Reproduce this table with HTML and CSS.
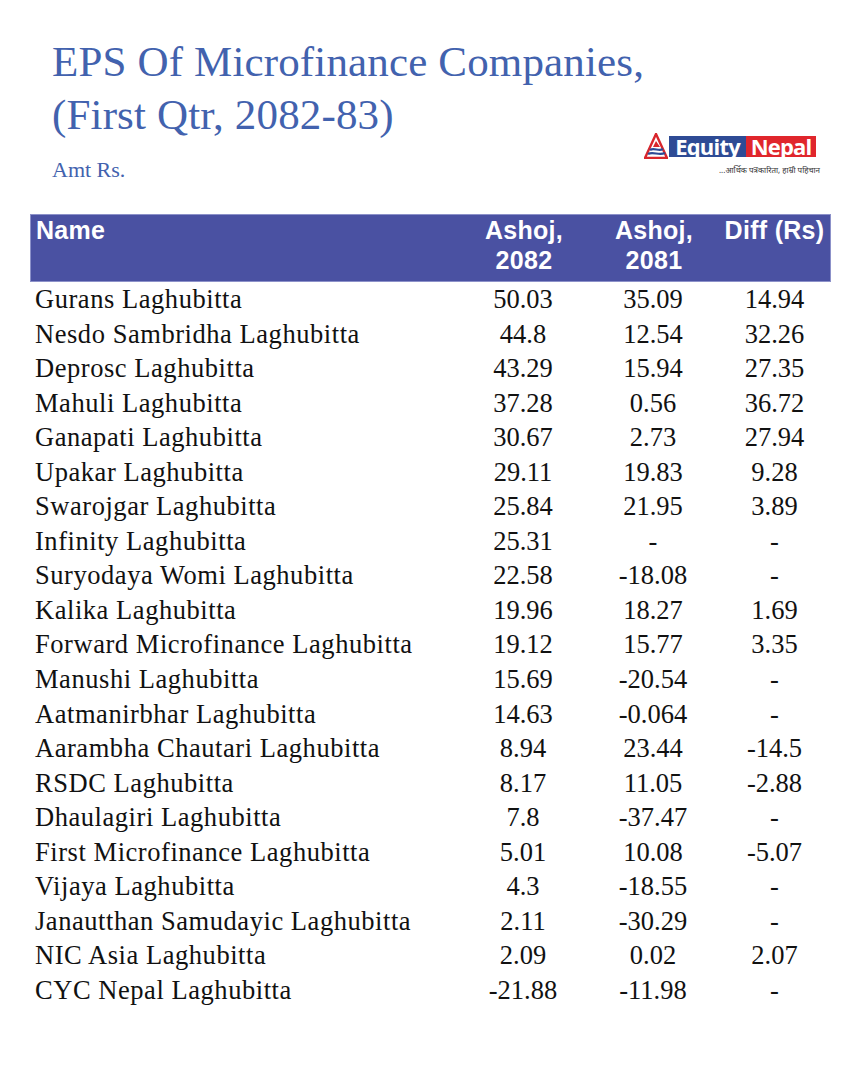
FILE: index.html
```html
<!DOCTYPE html>
<html lang="en">
<head>
<meta charset="utf-8">
<title>EPS Of Microfinance Companies</title>
<link rel="stylesheet" href="styles.css">
</head>
<body>
<div class="page">
  <header class="top">
    <div class="titles">
      <h1 class="title">EPS Of Microfinance Companies,<br>(First Qtr, 2082-83)</h1>
      <p class="unit">Amt Rs.</p>
    </div>
    <div class="logo">
      <div class="logo-bar">
        <svg class="logo-icon" viewBox="0 0 24 26" width="24" height="26">
          <path d="M12 1 L23 25 L1 25 Z" fill="none" stroke="#d9262c" stroke-width="2.4" stroke-linejoin="miter"/>
          <path d="M12 8 L16 14 L9 14 Z" fill="#d9262c"/>
          <path d="M6 17 C10 14 15 19 19 16" fill="none" stroke="#2d4b96" stroke-width="2.2"/>
          <path d="M4 21 C9 18 15 23 21 20" fill="none" stroke="#2d4b96" stroke-width="2.2"/>
        </svg>
        <span class="logo-equity">Equity</span><span class="logo-nepal">Nepal</span>
      </div>
      <div class="logo-tag">...आर्थिक पत्रकारिता, हाम्रो पहिचान</div>
    </div>
  </header>

  <div class="table">
    <div class="thead">
      <div class="th th-name">Name</div>
      <div class="th">Ashoj,<br>2082</div>
      <div class="th">Ashoj,<br>2081</div>
      <div class="th">Diff (Rs)</div>
    </div>
    <div class="tbody">
      <div class="td name">Gurans Laghubitta</div><div class="td">50.03</div><div class="td">35.09</div><div class="td">14.94</div>
      <div class="td name">Nesdo Sambridha Laghubitta</div><div class="td">44.8</div><div class="td">12.54</div><div class="td">32.26</div>
      <div class="td name">Deprosc Laghubitta</div><div class="td">43.29</div><div class="td">15.94</div><div class="td">27.35</div>
      <div class="td name">Mahuli Laghubitta</div><div class="td">37.28</div><div class="td">0.56</div><div class="td">36.72</div>
      <div class="td name">Ganapati Laghubitta</div><div class="td">30.67</div><div class="td">2.73</div><div class="td">27.94</div>
      <div class="td name">Upakar Laghubitta</div><div class="td">29.11</div><div class="td">19.83</div><div class="td">9.28</div>
      <div class="td name">Swarojgar Laghubitta</div><div class="td">25.84</div><div class="td">21.95</div><div class="td">3.89</div>
      <div class="td name">Infinity Laghubitta</div><div class="td">25.31</div><div class="td">-</div><div class="td">-</div>
      <div class="td name">Suryodaya Womi Laghubitta</div><div class="td">22.58</div><div class="td">-18.08</div><div class="td">-</div>
      <div class="td name">Kalika Laghubitta</div><div class="td">19.96</div><div class="td">18.27</div><div class="td">1.69</div>
      <div class="td name">Forward Microfinance Laghubitta</div><div class="td">19.12</div><div class="td">15.77</div><div class="td">3.35</div>
      <div class="td name">Manushi Laghubitta</div><div class="td">15.69</div><div class="td">-20.54</div><div class="td">-</div>
      <div class="td name">Aatmanirbhar Laghubitta</div><div class="td">14.63</div><div class="td">-0.064</div><div class="td">-</div>
      <div class="td name">Aarambha Chautari Laghubitta</div><div class="td">8.94</div><div class="td">23.44</div><div class="td">-14.5</div>
      <div class="td name">RSDC Laghubitta</div><div class="td">8.17</div><div class="td">11.05</div><div class="td">-2.88</div>
      <div class="td name">Dhaulagiri Laghubitta</div><div class="td">7.8</div><div class="td">-37.47</div><div class="td">-</div>
      <div class="td name">First Microfinance Laghubitta</div><div class="td">5.01</div><div class="td">10.08</div><div class="td">-5.07</div>
      <div class="td name">Vijaya Laghubitta</div><div class="td">4.3</div><div class="td">-18.55</div><div class="td">-</div>
      <div class="td name">Janautthan Samudayic Laghubitta</div><div class="td">2.11</div><div class="td">-30.29</div><div class="td">-</div>
      <div class="td name">NIC Asia Laghubitta</div><div class="td">2.09</div><div class="td">0.02</div><div class="td">2.07</div>
      <div class="td name">CYC Nepal Laghubitta</div><div class="td">-21.88</div><div class="td">-11.98</div><div class="td">-</div>
    </div>
  </div>
</div>
</body>
</html>
```

FILE: styles.css
```css
html, body {
  margin: 0;
  padding: 0;
  background: #ffffff;
}

.page {
  width: 864px;
  height: 1080px;
  box-sizing: border-box;
  padding: 0 33px 0 30px;
  font-family: "Liberation Serif", "Times New Roman", serif;
  color: #111111;
}

.top {
  display: flex;
  justify-content: space-between;
  align-items: flex-end;
  padding: 35px 0 0 22px;
  height: 214px;
  box-sizing: border-box;
}

.titles {
  align-self: flex-start;
  flex: none;
}

.title {
  margin: 0;
  font-weight: normal;
  font-size: 43px;
  line-height: 53px;
  color: #4262ae;
  letter-spacing: 0.15px;
  white-space: nowrap;
}

.unit {
  margin: 16px 0 0;
  font-size: 22px;
  line-height: 26px;
  color: #4262ae;
}

.logo {
  flex: none;
  display: flex;
  flex-direction: column;
  align-items: flex-end;
  margin-bottom: 39px;
  margin-right: 14px;
}

.logo-bar {
  display: flex;
  align-items: center;
  height: 26px;
  margin-right: 4px;
}

.logo-icon {
  display: block;
  margin-right: 1px;
}

.logo-equity,
.logo-nepal {
  display: flex;
  align-items: center;
  justify-content: center;
  font-family: "Open Sans", "Noto Sans", sans-serif;
  font-weight: 700;
  font-size: 22px;
  line-height: 21px;
  height: 21px;
  color: #ffffff;
  letter-spacing: -0.8px;
  box-sizing: border-box;
  white-space: nowrap;
}

.logo-equity {
  background: #2e4b95;
  width: 77px;
}

.logo-nepal {
  background: #e0262c;
  width: 70px;
}

.logo-tag {
  margin-top: 6px;
  font-family: "Noto Sans", "DejaVu Sans", sans-serif;
  font-size: 8px;
  line-height: 10px;
  color: #333333;
  white-space: nowrap;
}

.thead {
  display: grid;
  grid-template-columns: 428px 130px 130px 1fr;
  background: #4a51a2;
  border: 1px solid #8c91c9;
  height: 68px;
  box-sizing: border-box;
  font-family: "Liberation Sans", Arial, sans-serif;
  font-weight: 700;
  font-size: 25px;
  line-height: 30px;
  letter-spacing: 0.3px;
  color: #ffffff;
}

.th {
  text-align: center;
  padding-top: 0;
}

.th-name {
  text-align: left;
  padding-left: 5px;
}

.tbody {
  display: grid;
  grid-template-columns: 428px 130px 130px 1fr;
  grid-auto-rows: 34.55px;
  font-size: 26.5px;
  line-height: 34.55px;
}

.td {
  text-align: center;
  white-space: nowrap;
}

.td.name {
  text-align: left;
  padding-left: 5px;
  letter-spacing: 0.55px;
}
```
